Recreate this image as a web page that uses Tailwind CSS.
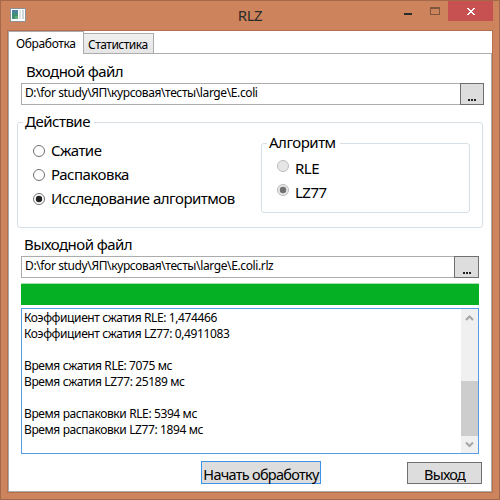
<!DOCTYPE html>
<html lang="ru">
<head>
<meta charset="utf-8">
<title>RLZ</title>
<script src="https://cdn.jsdelivr.net/npm/@tailwindcss/browser@4"></script>
</head>
<body class="w-[500px] h-[500px] overflow-hidden font-['Noto_Sans',sans-serif] text-black">
<div class="w-[500px] h-[500px] bg-[#cd845d] border border-[#a4684a] px-[6px] pb-[6px] flex flex-col">
  <header class="h-[29px] shrink-0 flex relative justify-center text-[#2b2b2b]">
    <svg class="absolute left-[3px] top-[7px]" width="16" height="14" viewBox="0 0 16 14" shape-rendering="crispEdges">
      <rect x=".5" y=".5" width="15" height="13" fill="#fff" stroke="#8d9297"/>
      <rect x="2" y="2" width="6" height="9" fill="#3f8f75"/><rect x="2" y="2" width="6" height="3" fill="#4b81a0"/><rect x="5" y="8" width="3" height="3" fill="#5cab7a"/>
      <rect x="9" y="2" width="2" height="9" fill="#dfe3e6"/><rect x="12" y="2" width="2" height="9" fill="#d1d6da"/>
    </svg>
    <h1 class="text-[15px] leading-[29px] tracking-[-0.5px]">RLZ</h1>
    <svg class="absolute right-[-1px] top-0" width="92" height="20" viewBox="0 0 92 20" shape-rendering="crispEdges">
      <rect x="2" y="12" width="8" height="2" fill="#2b2b2b"/>
      <path d="M28 6h10v8H28zM29 8v5h8V8z" fill="#7f573f" fill-rule="evenodd"/>
      <rect x="46" y="0" width="45" height="20" fill="#c75050"/>
      <path d="M65 7h2v1h1v1h2V8h1V7h2v1h-1v1h-1v1h-1v1h1v1h1v1h1v1h-2v-1h-1v-1h-2v1h-1v1h-2v-1h1v-1h1v-1h1v-1h-1V9h-1V8h-1z" fill="#fff"/>
    </svg>
  </header>
  <main class="flex-1 border border-[#b56f4e] bg-white flex flex-col">
    <nav class="flex h-[23px] shrink-0 items-end text-[12px]">
      <div class="w-[76px] h-[23px] border border-b-0 border-[#acacac] leading-[23px] pl-[7px] whitespace-nowrap bg-white tracking-[-0.35px]">Обработка</div>
      <div class="w-[70px] h-[21px] border-t border-r border-b border-[#acacac] bg-linear-to-b from-[#f0f0f0] to-[#e5e5e5] leading-[21px] pl-[4px] whitespace-nowrap tracking-[-0.5px]">Статистика</div>
      <div class="flex-1 border-b border-[#acacac]"></div>
    </nav>
    <section class="flex-1 border border-t-0 border-[#acacac] flex flex-col text-[15px]">
      <label class="h-[29px] pl-[17px] pt-[7px] leading-[20px] tracking-[-0.55px]">Входной файл</label>
      <div class="flex h-[22px] ml-[12px]">
        <div class="w-[440px] border border-r-0 border-[#acacac] pl-[3px] text-[12px] leading-[18px] whitespace-nowrap tracking-[-0.39px]">D:\for study\ЯП\курсовая\тесты\large\E.coli</div>
        <button class="w-[24px] h-[22px] -ml-px border border-[#707070] bg-[#ddd] flex items-end justify-center gap-[1px] pb-[3px]"><i class="w-[2px] h-[2px] bg-[#222]"></i><i class="w-[2px] h-[2px] bg-[#222]"></i><i class="w-[2px] h-[2px] bg-[#222]"></i></button>
      </div>
      <fieldset class="relative mt-[17px] ml-[8px] w-[466px] h-[106px] border border-[#d5dfe5] rounded-[3px] flex">
        <div class="absolute left-[5px] top-[-12px] px-[2px] bg-white leading-[20px] w-[71px] whitespace-nowrap tracking-[-0.5px]">Действие</div>
        <div class="w-[243px] pt-[16px] pl-[15px] flex flex-col tracking-[-0.5px] whitespace-nowrap">
          <label class="h-[24px] flex items-center gap-[6px]"><svg width="12" height="12"><circle cx="6" cy="6" r="5.5" fill="#fff" stroke="#707070"/></svg><span class="-mt-[2px]">Сжатие</span></label>
          <label class="h-[24px] flex items-center gap-[6px]"><svg width="12" height="12"><circle cx="6" cy="6" r="5.5" fill="#fff" stroke="#707070"/></svg><span class="-mt-[2px]">Распаковка</span></label>
          <label class="h-[24px] flex items-center gap-[6px]"><svg width="12" height="12"><circle cx="6" cy="6" r="5.5" fill="#fff" stroke="#707070"/><circle cx="6" cy="6" r="3.2" fill="#212121"/></svg><span class="-mt-[2px]">Исследование алгоритмов</span></label>
        </div>
        <fieldset class="relative mt-[20px] w-[209px] h-[70px] border border-[#d5dfe5] rounded-[3px] pt-[10px] pl-[15px] tracking-[-0.5px]">
          <div class="absolute left-[5px] top-[-12px] pl-[2px] bg-white leading-[20px] w-[73px] whitespace-nowrap">Алгоритм</div>
          <label class="h-[24px] flex items-start gap-[6px] leading-[28px]"><svg class="mt-[6px]" width="12" height="12"><circle cx="6" cy="6" r="5.5" fill="#e6e6e6" stroke="#bcbcbc"/></svg>RLE</label>
          <label class="h-[24px] flex items-start gap-[6px] leading-[28px]"><svg class="mt-[6px]" width="12" height="12"><circle cx="6" cy="6" r="5.5" fill="#e6e6e6" stroke="#bcbcbc"/><circle cx="6" cy="6" r="3.2" fill="#707070"/></svg>LZ77</label>
        </fieldset>
      </fieldset>
      <label class="h-[28px] pl-[15px] pt-[6px] leading-[20px] tracking-[-0.55px]">Выходной файл</label>
      <div class="flex h-[22px] ml-[12px]">
        <div class="w-[434px] border border-r-0 border-[#acacac] pl-[3px] text-[12px] leading-[18px] whitespace-nowrap tracking-[-0.38px]">D:\for study\ЯП\курсовая\тесты\large\E.coli.rlz</div>
        <button class="w-[25px] h-[22px] -ml-px border border-[#707070] bg-[#ddd] flex items-end justify-center gap-[1px] pb-[3px]"><i class="w-[2px] h-[2px] bg-[#222]"></i><i class="w-[2px] h-[2px] bg-[#222]"></i><i class="w-[2px] h-[2px] bg-[#222]"></i></button>
      </div>
      <div class="mt-[5px] ml-[12px] w-[458px] h-[22px] bg-[#06b025] border-t border-[#a8e0b2]"></div>
      <div class="mt-[3px] ml-[12px] w-[458px] h-[146px] border border-[#569de5] flex">
        <div class="flex-1 pt-[1px] pl-[2px] text-[12px] leading-[16px] whitespace-nowrap tracking-[-0.39px]">
          <p>Коэффициент сжатия RLE: 1,474466</p>
          <p>Коэффициент сжатия LZ77: 0,4911083</p>
          <p>&nbsp;</p>
          <p>Время сжатия RLE: 7075 мс</p>
          <p>Время сжатия LZ77: 25189 мс</p>
          <p>&nbsp;</p>
          <p>Время распаковки RLE: 5394 мс</p>
          <p>Время распаковки LZ77: 1894 мс</p>
        </div>
        <div class="w-[17px] bg-[#f0f0f0] flex flex-col">
          <svg width="17" height="17"><path d="M5 11L8.500 7.500L12 11" fill="none" stroke="#a5a5a5" stroke-width="2"/></svg>
          <div class="mt-[55px] h-[55px] bg-[#cdcdcd]"></div>
          <svg width="17" height="17"><path d="M5 6.500L8.500 10L12 6.500" fill="none" stroke="#a5a5a5" stroke-width="2"/></svg>
        </div>
      </div>
      <div class="flex mt-[7px] ml-[192px] whitespace-nowrap text-[14.5px]">
        <button class="w-[120px] h-[23px] border border-[#3c93ea] bg-[#ddd] leading-[24px] tracking-[-0.72px] flex justify-center">Начать обработку</button>
        <button class="ml-[86px] mt-px w-[75px] h-[22px] border border-[#707070] bg-[#ddd] leading-[22px] tracking-[-0.8px] flex justify-center">Выход</button>
      </div>
    </section>
  </main>
</div>
</body>
</html>
